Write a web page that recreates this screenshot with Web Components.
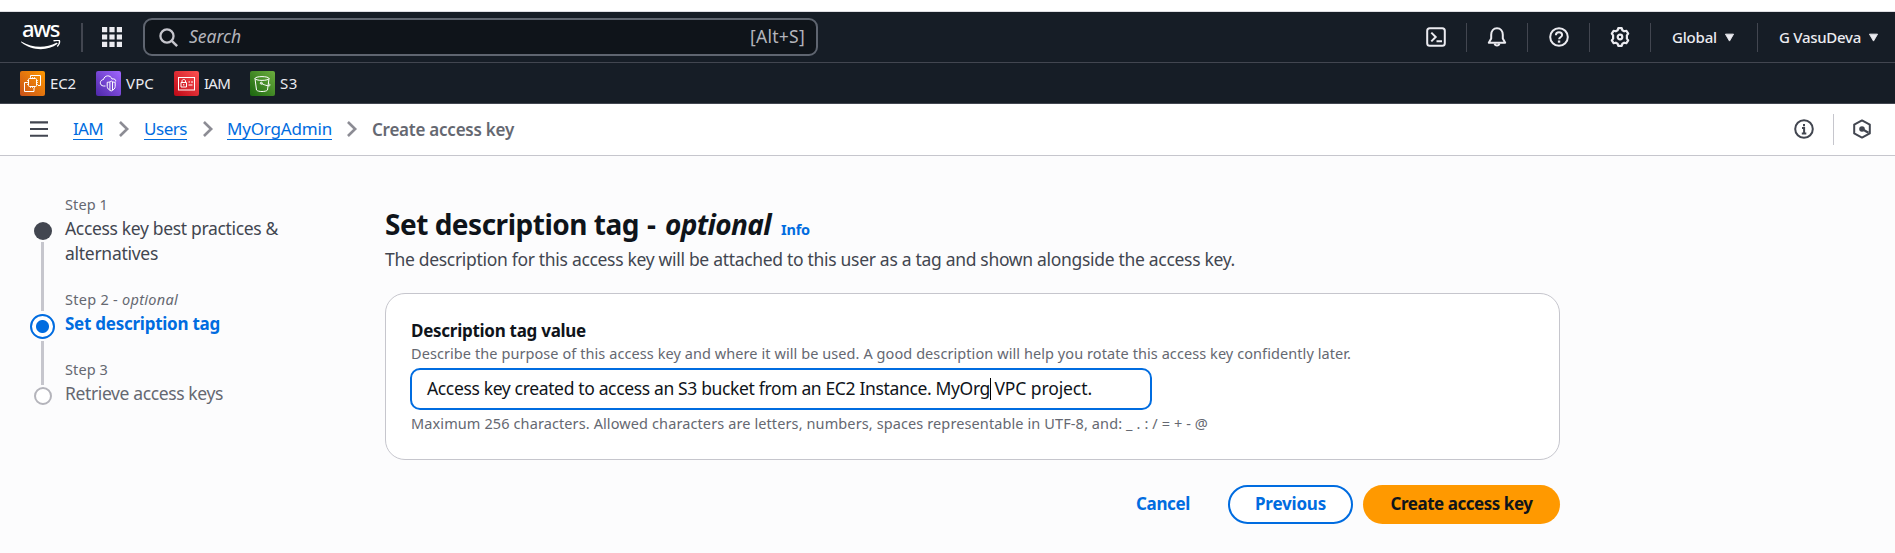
<!DOCTYPE html>
<html lang="en">
<head>
<meta charset="utf-8">
<title>Create access key</title>
<style>
body{margin:0;background:#fcfcfd;font-family:"Noto Sans","Open Sans",sans-serif;font-size:17px;color:#0f141a}
</style>
</head>
<body>
<console-page></console-page>
<script>
const component = (name, html, setup) => customElements.define(name, class extends HTMLElement {
  constructor() {
    super();
    const t = document.createElement('template');
    t.innerHTML = html;
    this.attachShadow({mode: 'open'}).append(t.content.cloneNode(true));
  }
  connectedCallback() { if (setup) setup(this, this.shadowRoot); }
});

const icons = {
  cloudshell: '<rect x="1.2" y="1.2" width="17.6" height="17.6" rx="2.5"/><path d="M5.3 5.6 9.7 10l-4.4 4.4M10.5 14.2H16"/>',
  bell: '<path d="M4.2 11.5V7.8C4.2 4 6.5 1.2 10 1.2s5.800 2.800 5.800 6.600v3.700L18.200 15.700H1.800z" stroke-linejoin="round"/><path d="M7.600 16.500c.3 1.400 1.200 2 2.400 2s2.100-.6 2.400-2" stroke-width="2"/>',
  help: '<circle cx="10" cy="10" r="8.800"/><path d="M6.900 8.200C6.900 6.300 8.200 5.200 10 5.200s3.100 1.100 3.100 2.800c0 2.200-3 2.200-3 4.200" /><path d="M10.050 13.500v2.200" stroke-width="2.400"/>',
  gear: '<path d="M7.600 3.300 8.300 1.200h3.400l.7 2.100 1.800 1 2.200-.5 1.800 2.800-1.300 1.700v3.400l1.300 1.700-1.800 2.800-2.200-.5-1.800 1-.7 2.100H8.300l-.7-2.100-1.800-1-2.200.5-1.800-2.800 1.300-1.700V8.300L1.800 6.600l1.800-2.800 2.200.5z" stroke-width="2.200" stroke-linejoin="round"/><circle cx="10" cy="10" r="2.300" stroke-width="2.200"/>',
  info: '<circle cx="10" cy="10" r="8.800"/><path d="M8 8.900h2.100v5.400M7.800 14.400h4.500M10 5v2.300"/>',
  hex: '<path d="M10 1.400 17.800 5.600v8.800L10 18.600 2.200 14.400V5.600z" stroke-linejoin="round"/><circle cx="10" cy="10" r="2.800" fill="currentColor" stroke="none"/><path d="m10 10 6.500 3.700" stroke-width="2.200"/>',
  chevron: '<path d="M5.500 2.200 13.500 10l-8 7.800" stroke-width="2.900"/>',
  burger: '<path d="M0 2.600h20M0 10h20M0 17.400h20" stroke-width="2.300"/>',
  search: '<circle cx="8.400" cy="8.400" r="6.900" stroke-width="2.400"/><path d="m13.200 13.200 5.900 5.900" stroke-width="2.600"/>',
  grid: '<path d="M0 2.600h20M0 10h20M0 17.400h20" stroke-width="5.200" stroke-dasharray="5.200 2.200"/>',
  caret: '<path d="M1 2.500h18L10 18z" fill="currentColor" stroke-linejoin="round" stroke-width="2"/>'
};
component('ui-icon', `<style>:host{display:block;width:20px;height:20px;flex:none}svg{display:block;width:100%;height:100%;overflow:visible}</style>
<svg viewBox="0 0 20 20" fill="none" stroke="currentColor" stroke-width="2"></svg>`,
  (el, root) => { root.querySelector('svg').innerHTML = icons[el.getAttribute('name')]; });

const services = {
  ec2: ['#c8511b', '#ff9900', '<rect x="8.500" y="7.500" width="8" height="8" rx="1"/><path d="M10.500 6v1.500M12.500 6v1.500M14.500 6v1.500M10.500 15.500V17M12.500 15.500V17M14.500 15.500V17M7 9.500h1.500M7 11.500h1.500M7 13.500h1.500M16.500 9.500H18M16.500 11.500H18M16.500 13.500H18" stroke-width=".8"/><path d="M10.500 6V4.500h10v10H18M7 11.500H4.500v9h9.500V17"/>'],
  vpc: ['#4d27a8', '#a166ff', '<path d="M9.500 15H7.500c-4.500-.5-4-6 0-6.500C8.500 4 14.500 3.500 16 8c2.500-.5 4 .5 3.700 2.500"/><path d="M15.200 10c1.300 1 2.600 1.300 4 1.300v4c0 2-1.500 3.700-4 4.700-2.500-1-4-2.700-4-4.700v-4c1.400 0 2.700-.3 4-1.300zM13.900 11v8M16.500 11v8"/>'],
  iam: ['#bd0816', '#ff5252', '<rect x="4.500" y="6.500" width="16" height="12.500"/><path d="M7 11.500h5.500V16H7zM8 11.500V10c0-2 3.500-2 3.500 0v1.500M9.750 13v1.500M14.500 11h1.500M17 11h2M14.500 14h4"/>'],
  s3: ['#1b660f', '#6cae3e', '<ellipse cx="12" cy="7.500" rx="7" ry="1.900"/><path d="M5 7.500 6.500 19c1.500 2 9.500 2 11 0L19 7.500M11.500 12.500c4.500 2.200 8.500 3 8.500 1.700s-1.200-1.500-2-2"/><circle cx="11.300" cy="12.200" r="1"/>']
};
component('service-link', `<style>:host{display:flex;align-items:center;gap:5px;height:25px;color:#ebebf0;font-size:15px;line-height:24px}svg{flex:none;display:block}</style>
<svg width="25" height="25" viewBox="0 0 25 25" fill="none" stroke="#fff" stroke-width="1"></svg><slot></slot>`,
  (el, root) => {
    const id = el.getAttribute('service'), [a, b, art] = services[id];
    root.querySelector('svg').innerHTML = `<defs><linearGradient id="g" x1="0" y1="1" x2="1" y2="0"><stop stop-color="${a}"/><stop offset="1" stop-color="${b}"/></linearGradient></defs><rect width="25" height="25" rx="2" fill="url(#g)" stroke="none"/>${art}`;
  });

component('aws-logo', `<style>:host{display:flex;flex-direction:column;width:40px;height:28px;color:#fff;font-size:22px;font-weight:500;line-height:10px}svg{display:block;margin-top:7px}fit-text{margin-left:1px}</style>
<fit-text w="37">aws</fit-text>
<svg width="40" height="10" viewBox="0 0 40 10"><path d="M.3 1.500C11 8 24.500 8.500 35.500 2.800c.8-.4 1.500.6.800 1.200C27 11 11 11.300.2 2.200c-.4-.3-.2-.9.100-.7z" fill="#fff"/><path d="M32.500 .9c2-.7 4.500-.8 5.800-.4.600 1.600-.4 4.300-2 6" fill="none" stroke="#fff" stroke-width="1.400"/></svg>`);

component('top-bar', `<style>
:host{display:flex;align-items:center;box-sizing:border-box;height:51px;padding:0 17px 0 21px;background:#161d26;border-bottom:1px solid #424650;color:#ebebf0}
i.sep{width:1px;height:29px;background:#424650}
.first{width:2px!important;margin:0 19px 0 20px}
.search{display:flex;align-items:center;box-sizing:border-box;width:675px;height:38px;margin-left:21px;padding:0 11px 0 14px;border:2px solid #5f6570;border-radius:9px;background:#0f141a;color:#b4b4bb;font-size:17.5px;line-height:30px}
.search ui-icon{width:19px;height:19px;margin-right:11px;color:#c6c6cd}
.search fit-text{margin-bottom:2px}
.hint{margin-left:auto}
.right{display:flex;align-items:center;margin-left:auto}
.tool{display:flex;justify-content:center;width:61px}
.menu{display:flex;align-items:center;gap:8px;font-size:15px;font-weight:500;line-height:20px}
.menu ui-icon{width:9px;height:9px}
</style>
<aws-logo></aws-logo><i class="sep first"></i><ui-icon name="grid"></ui-icon>
<div class="search"><ui-icon name="search"></ui-icon><fit-text w="52" style="font-style:italic">Search</fit-text><fit-text class="hint" w="55">[Alt+S]</fit-text></div>
<div class="right">
<ui-icon name="cloudshell" style="margin-right:20px"></ui-icon><i class="sep"></i>
<div class="tool" style="width:60px"><ui-icon name="bell"></ui-icon></div><i class="sep"></i>
<div class="tool"><ui-icon name="help"></ui-icon></div><i class="sep"></i>
<div class="tool" style="width:60px"><ui-icon name="gear"></ui-icon></div><i class="sep"></i>
<div class="menu" style="margin:0 23px 0 21px"><fit-text w="45">Global</fit-text><ui-icon name="caret"></ui-icon></div><i class="sep"></i>
<div class="menu" style="margin-left:21px"><fit-text w="82">G VasuDeva</fit-text><ui-icon name="caret"></ui-icon></div>
</div>`);

component('favorites-bar', `<style>:host{display:flex;align-items:center;box-sizing:border-box;height:41px;padding-left:20px;gap:20px;background:#161d26;border-bottom:1px solid #424650}</style>
<service-link service="ec2"><fit-text w="26">EC2</fit-text></service-link>
<service-link service="vpc"><fit-text w="28">VPC</fit-text></service-link>
<service-link service="iam"><fit-text w="26">IAM</fit-text></service-link>
<service-link service="s3"><fit-text w="18">S3</fit-text></service-link>`);

component('crumb-link', `<style>:host{display:block;border-bottom:1px solid #006ce0;color:#006ce0;line-height:21px;height:21px}</style><slot></slot>`);

component('breadcrumb-bar', `<style>
:host{display:flex;align-items:center;box-sizing:border-box;height:52px;padding:0 23px 1px 30px;background:#fff;border-bottom:1px solid #c6c6cd;color:#424650}
.trail{display:flex;align-items:center;margin-left:25px}
.trail ui-icon{color:#8c8c94;width:18px;height:18px}
b{color:#656871;font-weight:600;line-height:21px}
.right{display:flex;align-items:center;margin-left:auto}
.right i{width:1px;height:31px;background:#c6c6cd;margin:0 18px 0 19px}
</style>
<ui-icon name="burger" style="width:18px;height:18px"></ui-icon>
<div class="trail"><crumb-link><fit-text w="30">IAM</fit-text></crumb-link><ui-icon name="chevron" style="margin:0 11px 0 12px"></ui-icon>
<crumb-link><fit-text w="43">Users</fit-text></crumb-link><ui-icon name="chevron" style="margin:0 10px 0 12px"></ui-icon>
<crumb-link><fit-text w="105">MyOrgAdmin</fit-text></crumb-link><ui-icon name="chevron" style="margin:0 11px"></ui-icon>
<b><fit-text w="142">Create access key</fit-text></b></div>
<div class="right"><ui-icon name="info"></ui-icon><i></i><ui-icon name="hex"></ui-icon></div>`);

component('wizard-step', `<style>
:host{display:grid;grid-template-columns:27px 1fr;column-gap:9px;color:#424650}
.rail{display:flex;flex-direction:column;align-items:center}
.up,.down{width:3px;background:#c6c6cd}
.up{height:26px}.down{flex:1}
:host([state=done]) .up,:host([state=todo]) .down{background:none}
.dot{display:flex;align-items:center;justify-content:center;height:22px}
.dot span{box-sizing:border-box;width:18px;height:18px;border-radius:50%;background:#424650}
:host([state=active]) .up{height:22px}
:host([state=active]) .dot{height:30px}
:host([state=active]) .dot span{width:25px;height:25px;border:2px solid #006ce0;background:radial-gradient(circle,#006ce0 6px,#fff 7px)}
:host([state=todo]) .dot span{border:2px solid #b4b4bb;background:#fff}
.text{padding-bottom:23px}
.num{font-size:14.5px;line-height:20px;margin-bottom:2px;color:#656871}
.name{font-size:17.5px;line-height:25px}
:host([state=active]) .name{font-size:17px;color:#006ce0;font-weight:700}
:host([state=todo]) .name{color:#656871}
</style>
<div class="rail"><div class="up"></div><div class="dot"><span></span></div><div class="down"></div></div>
<div class="text"><div class="num"><slot name="num"></slot></div><div class="name"><slot></slot></div></div>`);

component('wizard-nav', `<style>:host{display:block;width:355px;box-sizing:border-box;padding:38px 0 0 29px}</style>
<wizard-step state="done"><fit-text slot="num" w="43">Step 1</fit-text><fit-text w="213">Access key best practices &amp;</fit-text><br><fit-text w="93">alternatives</fit-text></wizard-step>
<wizard-step state="active"><span slot="num"><fit-text w="113">Step 2 - <em>optional</em></fit-text></span><fit-text w="155">Set description tag</fit-text></wizard-step>
<wizard-step state="todo"><fit-text slot="num" w="43">Step 3</fit-text><fit-text w="158">Retrieve access keys</fit-text></wizard-step>`);

component('ui-button', `<style>
:host{display:flex;align-items:center;justify-content:center;box-sizing:border-box;height:39px;border-radius:20px;font-weight:700;color:#006ce0;line-height:24px;padding-bottom:1px}
:host([variant=normal]){border:2px solid #006ce0;background:#fff}
:host([variant=primary]){background:#ff9900;color:#0f141a}
</style><slot></slot>`);

component('description-field', `<style>
:host{display:block;box-sizing:border-box;height:167px;border:1px solid #c6c6cd;border-radius:20px;background:#fff;padding:24px 25px 0}
.label{font-weight:700;line-height:25px;color:#0f141a}
.help{font-size:14.5px;line-height:20px;color:#656871}
.input{display:flex;align-items:center;box-sizing:border-box;width:742px;height:42px;margin:5px 0 3px -1px;padding-left:15px;border:2px solid #006ce0;border-radius:10px;font-size:17.5px;line-height:26px;background:#fff}
.input fit-text{margin-bottom:2px}
.caret{width:1px;height:22px;margin-right:-1px;background:#000}
</style>
<div class="label"><fit-text w="175">Description tag value</fit-text></div>
<div class="help"><fit-text w="940">Describe the purpose of this access key and where it will be used. A good description will help you rotate this access key confidently later.</fit-text></div>
<div class="input"><fit-text w="563">Access key created to access an S3 bucket from an EC2 Instance. MyOrg</fit-text><span class="caret"></span><fit-text w="102">&nbsp;VPC project.</fit-text></div>
<div class="help"><fit-text w="797">Maximum 256 characters. Allowed characters are letters, numbers, spaces representable in UTF-8, and: _ . : / = + - @</fit-text></div>`);

component('page-form', `<style>
:host{display:block;width:1175px;padding-top:50px}
h1{display:flex;align-items:baseline;margin:0;font-size:28px;line-height:37px;font-weight:700}
.info{margin-left:10px;font-size:14.500px;color:#006ce0}
p{height:24px;margin:0 0 21px;font-size:17.5px;line-height:22px;color:#424650}
.actions{display:flex;justify-content:flex-end;gap:10px;margin-top:25px}
</style>
<h1><fit-text w="254">Set description tag</fit-text><fit-text w="11" style="margin:0 7px 0 8px">-</fit-text><fit-text w="106" style="font-style:italic">optional</fit-text><fit-text class="info" w="29">Info</fit-text></h1>
<p><fit-text w="850">The description for this access key will be attached to this user as a tag and shown alongside the access key.</fit-text></p>
<description-field></description-field>
<div class="actions"><ui-button style="width:90px;margin-right:10px"><fit-text w="54">Cancel</fit-text></ui-button>
<ui-button variant="normal" style="width:125px"><fit-text w="71">Previous</fit-text></ui-button>
<ui-button variant="primary" style="width:197px"><fit-text w="142">Create access key</fit-text></ui-button></div>`);

component('console-page', `<style>:host{display:block;height:553px;overflow:hidden}.edge{box-sizing:border-box;height:12px;background:#fff;border-bottom:1px solid #dedee3}.body{display:flex;align-items:flex-start}page-form{margin-left:30px}</style>
<div class="edge"></div><top-bar></top-bar><favorites-bar></favorites-bar><breadcrumb-bar></breadcrumb-bar>
<div class="body"><wizard-nav></wizard-nav><page-form></page-form></div>`);

// A single line of text, tracked so that it fills the width given in "w".
// Registered last, so that every inherited font is in place when it measures.
component('fit-text', `<style>:host{display:inline-block;white-space:nowrap;flex:none}span{display:inline-block;white-space:nowrap}</style><span><slot></slot></span>`,
  (el, root) => {
    const w = +el.getAttribute('w'), span = root.querySelector('span');
    const natural = span.getBoundingClientRect().width;
    span.style.letterSpacing = (w - natural) / el.textContent.length + 'px';
    el.style.width = w + 'px';
  });
</script>
</body>
</html>
